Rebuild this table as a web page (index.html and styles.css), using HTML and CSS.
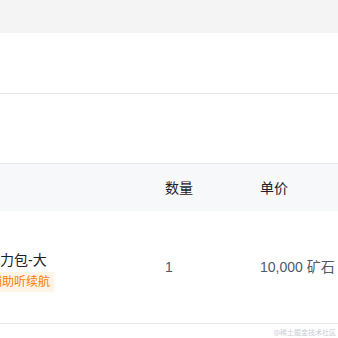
FILE: index.html
```
<!DOCTYPE html>
<html lang="zh">
<head>
<meta charset="utf-8">
<link rel="stylesheet" href="styles.css">
</head>
<body>
<div class="page">
  <div class="topband"></div>
  <div class="blank1"></div>
  <div class="blank2"></div>
  <div class="table">
    <div class="thead">
      <div class="th th-product"></div>
      <div class="th">数量</div>
      <div class="th">单价</div>
    </div>
    <div class="trow">
      <div class="td td-product">
        <div class="pname">电力包-大</div>
        <span class="tag">辅助听续航</span>
      </div>
      <div class="td td-num">1</div>
      <div class="td td-num">10,000 矿石</div>
    </div>
  </div>
  <div class="watermark">@稀土掘金技术社区</div>
</div>
</body>
</html>
```
FILE: styles.css
```
html, body {
  margin: 0;
  padding: 0;
  background: #ffffff;
}
.page {
  position: relative;
  width: 338px;
  height: 338px;
  overflow: hidden;
  font-family: "Liberation Sans", "Noto Sans CJK SC", sans-serif;
  font-size: 14px;
  color: #1d2129;
}
.topband {
  height: 33px;
  background: #f3f4f3;
}
.blank1 {
  height: 60px;
  border-bottom: 1px solid #e5e6eb;
}
.blank2 {
  height: 69px;
}
.table {
  border-top: 1px solid #e5e6eb;
}
.thead, .trow {
  display: grid;
  grid-template-columns: 165px 95px 1fr;
}
.thead {
  height: 47px;
  background: #f7f8fa;
  align-items: center;
}
.th {
  line-height: 22px;
  color: #1d2129;
  white-space: nowrap;
}
.trow {
  height: 112px;
  border-bottom: 1px solid #e5e6eb;
  align-items: center;
}
.td {
  white-space: nowrap;
}
.td-product {
  margin-left: -14px;
  display: flex;
  flex-direction: column;
  align-items: flex-start;
  gap: 2px;
  padding-top: 7px;
}
.pname {
  line-height: 20px;
  color: #1d2129;
}
.tag {
  font-size: 12px;
  line-height: 20px;
  padding: 0 4px;
  color: #ff7d00;
  background: #fff4e6;
}
.td-num {
  color: #4e5969;
  line-height: 22px;
}
.watermark {
  position: absolute;
  right: 2px;
  bottom: 1px;
  font-size: 7px;
  line-height: 10px;
  color: #c9cdd4;
  font-family: "Noto Sans CJK SC", sans-serif;
}
```
